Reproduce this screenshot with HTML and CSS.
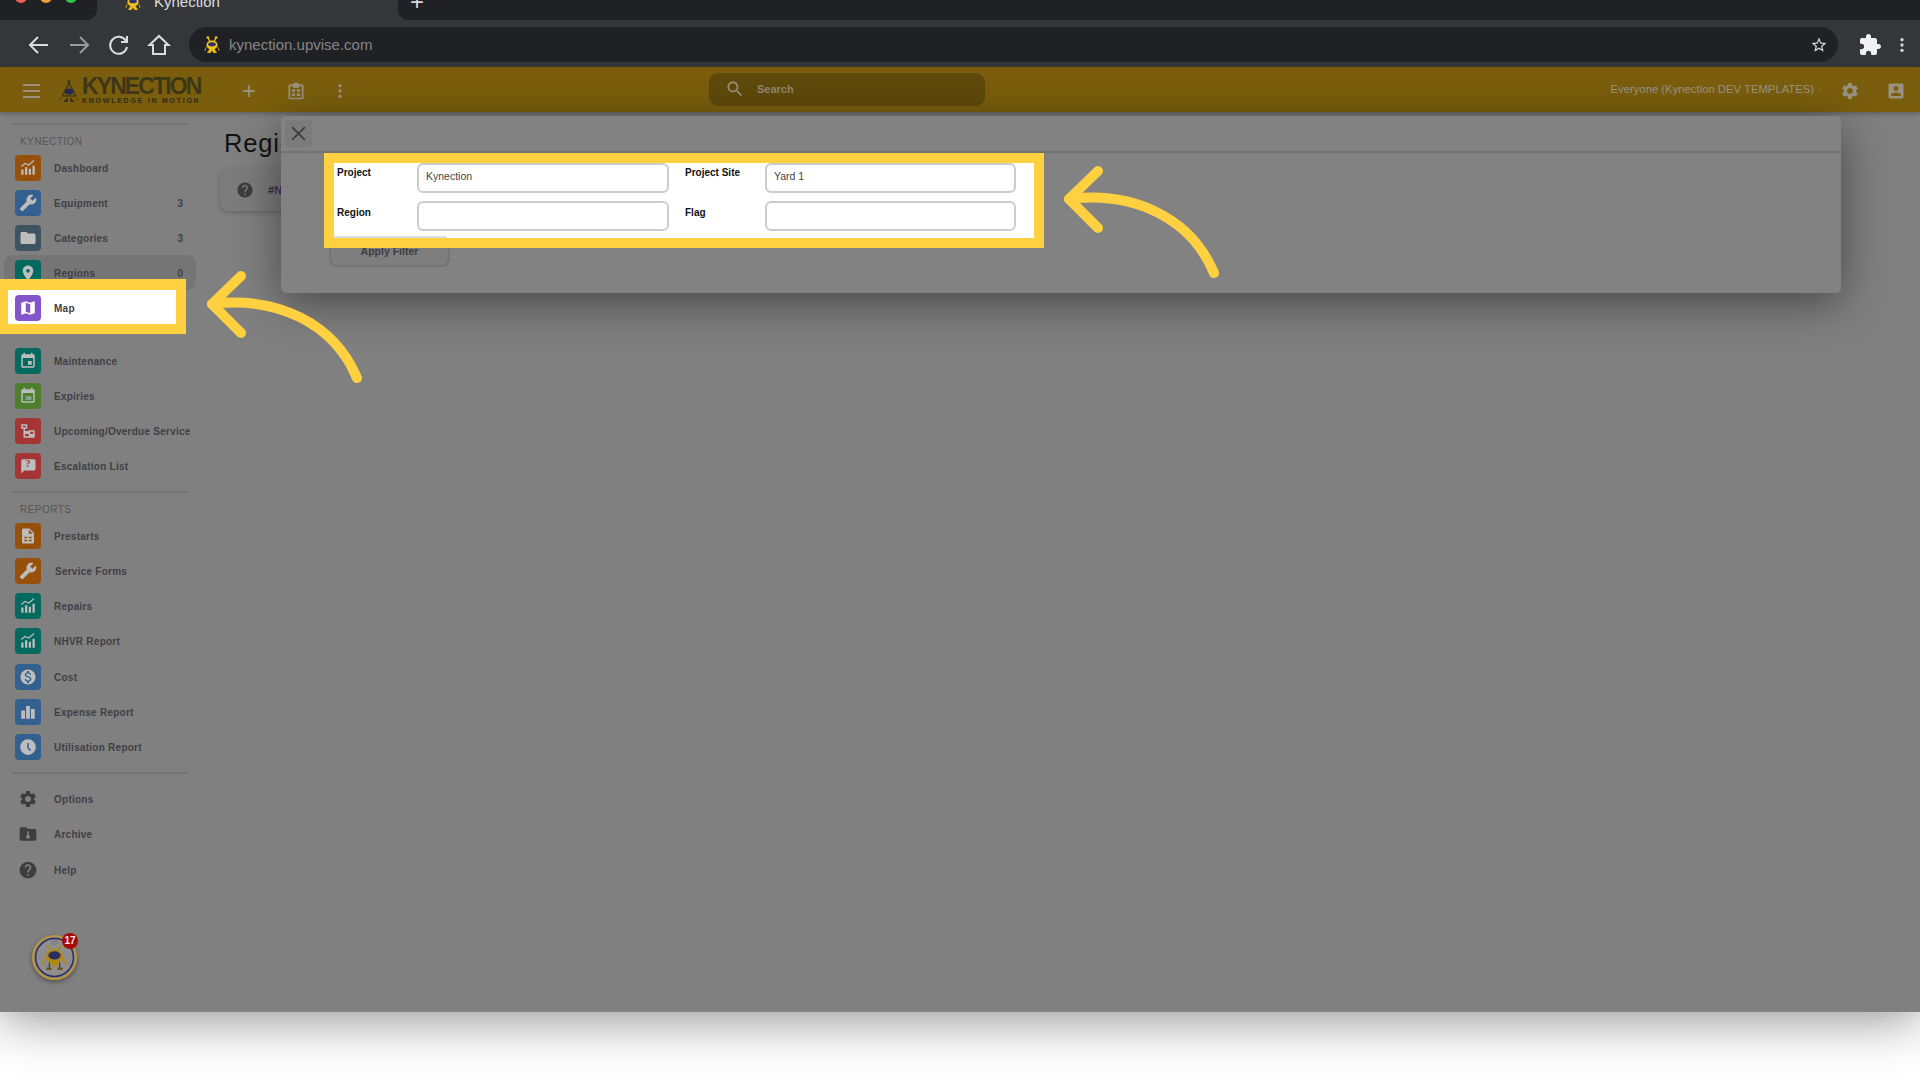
FILE: index.html
```html
<!DOCTYPE html>
<html lang="en">
<head>
  <meta charset="UTF-8" />
  <title>Kynection</title>
  <link rel="stylesheet" href="styles.css">
</head>
<body>

<!-- icon sheet -->
<svg class="sprites" width="0" height="0">
  <defs>
    <symbol id="i-chart" viewBox="0 0 24 24"><path d="M3 14h3v7H3zM8 11h3v10H8zM13 13h3v8h-3zM18 9h3v12h-3z"/><path d="M3 10l5-4 5 2 7-6" fill="none" stroke="currentColor" stroke-width="1.6"/></symbol>
    <symbol id="i-wrench" viewBox="0 0 24 24"><path transform="matrix(-1 0 0 1 24 0)" d="M22.7 19l-9.1-9.1c.9-2.3.4-5-1.5-6.9-2-2-5-2.4-7.4-1.3L9 6 6 9 1.6 4.7C.4 7.1.9 10.1 2.9 12.1c1.9 1.9 4.6 2.4 6.9 1.5l9.1 9.1c.4.4 1 .4 1.4 0l2.3-2.3c.5-.4.5-1.1.1-1.4z"/></symbol>
    <symbol id="i-folder" viewBox="0 0 24 24"><path d="M10 4H4c-1.1 0-1.99.9-1.99 2L2 18c0 1.1.9 2 2 2h16c1.1 0 2-.9 2-2V8c0-1.1-.9-2-2-2h-8l-2-2z"/></symbol>
    <symbol id="i-place" viewBox="0 0 24 24"><path d="M12 2C8.13 2 5 5.13 5 9c0 5.25 7 13 7 13s7-7.75 7-13c0-3.87-3.13-7-7-7zm0 9.5c-1.38 0-2.5-1.12-2.5-2.5s1.12-2.5 2.5-2.5 2.5 1.12 2.5 2.5-1.12 2.5-2.5 2.5z"/></symbol>
    <symbol id="i-map" viewBox="0 0 24 24"><path d="M20.5 3l-.16.03L15 5.1 9 3 3.36 4.9c-.21.07-.36.25-.36.48V20.5c0 .28.22.5.5.5l.16-.03L9 18.9l6 2.1 5.64-1.9c.21-.07.36-.25.36-.48V3.5c0-.28-.22-.5-.5-.5zM15 19l-6-2.11V5l6 2.11V19z"/></symbol>
    <symbol id="i-event" viewBox="0 0 24 24"><path d="M17 12h-5v5h5v-5zM16 1v2H8V1H6v2H5c-1.11 0-1.99.9-1.99 2L3 19c0 1.1.89 2 2 2h14c1.1 0 2-.9 2-2V5c0-1.1-.9-2-2-2h-1V1h-2zm3 18H5V8h14v11z"/></symbol>
    <symbol id="i-cal30" viewBox="0 0 24 24"><path d="M16 1v2H8V1H6v2H5c-1.11 0-1.99.9-1.99 2L3 19c0 1.1.89 2 2 2h14c1.1 0 2-.9 2-2V5c0-1.1-.9-2-2-2h-1V1h-2zm3 18H5V8h14v11z"/><text x="12" y="17.5" text-anchor="middle" font-family="Liberation Serif, serif" font-size="9" font-weight="700">30</text></symbol>
    <symbol id="i-gantt" viewBox="0 0 24 24"><path d="M3 3h8v6H8v3h5v-1h8v7h-8v-2H8v3h5v-1h8v3H6V9H3zM5 5v2h4V5zM15 13v3h4v-3z"/></symbol>
    <symbol id="i-bubble" viewBox="0 0 24 24"><path d="M3 5c0-1 .9-2 2-2h15c1.1 0 2 1 2 2v11c0 1.1-.9 2-2 2H7l-4 4z"/></symbol>
    <symbol id="i-doc" viewBox="0 0 24 24"><path d="M6 2h8l6 6v12c0 1.1-.9 2-2 2H6c-1.1 0-2-.9-2-2V4c0-1.1.9-2 2-2zm1 11v2h4v-2zm6 0v2h4v-2zm-6 4v2h4v-2zm6 0v2h4v-2zM13 3.5V9h5.5z"/></symbol>
    <symbol id="i-dollar" viewBox="0 0 24 24"><path d="M12 2C6.48 2 2 6.48 2 12s4.48 10 10 10 10-4.48 10-10S17.52 2 12 2zm1.41 16.09V20h-2.67v-1.93c-1.71-.36-3.16-1.46-3.27-3.4h1.96c.1 1.05.82 1.87 2.65 1.87 1.96 0 2.4-.98 2.4-1.59 0-.83-.44-1.61-2.67-2.14-2.48-.6-4.18-1.62-4.18-3.67 0-1.72 1.39-2.84 3.11-3.21V4h2.67v1.95c1.86.45 2.79 1.86 2.85 3.39H14.3c-.05-1.11-.64-1.87-2.22-1.87-1.5 0-2.4.68-2.4 1.64 0 .84.65 1.39 2.67 1.91s4.18 1.39 4.18 3.91c-.01 1.83-1.38 2.83-3.12 3.16z"/></symbol>
    <symbol id="i-bars" viewBox="0 0 24 24"><path d="M3 10h5v11H3zM9.500 4h5v17h-5zM16 8h5v13h-5z"/></symbol>
    <symbol id="i-clock" viewBox="0 0 24 24"><path d="M12 1.5a10.5 10.5 0 1 0 0 21 10.5 10.5 0 0 0 0-21zm-1 5h2v6.2l3.2 3.2-1.4 1.4-3.8-3.8z"/></symbol>
    <symbol id="i-gear" viewBox="0 0 24 24"><path d="M19.14 12.94c.04-.3.06-.61.06-.94 0-.32-.02-.64-.07-.94l2.03-1.58c.18-.14.23-.41.12-.61l-1.92-3.32c-.12-.22-.37-.29-.59-.22l-2.39.96c-.5-.38-1.03-.7-1.62-.94l-.36-2.54c-.04-.24-.24-.41-.48-.41h-3.84c-.24 0-.43.17-.47.41l-.36 2.54c-.59.24-1.13.57-1.62.94l-2.39-.96c-.22-.08-.47 0-.59.22L2.74 8.87c-.12.21-.08.47.12.61l2.03 1.58c-.05.3-.09.63-.09.94s.02.64.07.94l-2.03 1.58c-.18.14-.23.41-.12.61l1.92 3.32c.12.22.37.29.59.22l2.39-.96c.5.38 1.03.7 1.62.94l.36 2.54c.05.24.24.41.48.41h3.84c.24 0 .44-.17.47-.41l.36-2.54c.59-.24 1.13-.56 1.62-.94l2.39.96c.22.08.47 0 .59-.22l1.92-3.32c.12-.22.07-.47-.12-.61l-2.01-1.58zM12 15.6c-1.98 0-3.6-1.62-3.6-3.6s1.62-3.6 3.6-3.6 3.6 1.62 3.6 3.6-1.62 3.6-3.6 3.6z"/></symbol>
    <symbol id="i-archive" viewBox="0 0 24 24"><path d="M10 4H4c-1.1 0-2 .9-2 2v12c0 1.1.9 2 2 2h16c1.1 0 2-.9 2-2V8c0-1.1-.9-2-2-2h-8zm1 5h2v4.1a2.5 2.5 0 1 1-2 0z"/></symbol>
    <symbol id="i-help" viewBox="0 0 24 24"><path d="M12 2C6.48 2 2 6.48 2 12s4.48 10 10 10 10-4.48 10-10S17.52 2 12 2zm1 17h-2v-2h2v2zm2.07-7.75l-.9.92C13.45 12.9 13 13.5 13 15h-2v-.5c0-1.1.45-2.1 1.17-2.83l1.24-1.26c.37-.36.59-.86.59-1.41 0-1.1-.9-2-2-2s-2 .9-2 2H8c0-2.21 1.79-4 4-4s4 1.79 4 4c0 .88-.36 1.68-.93 2.25z"/></symbol>
    <symbol id="i-search" viewBox="0 0 24 24"><path d="M15.5 14h-.79l-.28-.27C15.41 12.59 16 11.11 16 9.5 16 5.91 13.09 3 9.5 3S3 5.91 3 9.5 5.91 16 9.5 16c1.61 0 3.09-.59 4.23-1.57l.27.28v.79l5 4.99L20.49 19l-4.99-5zm-6 0C7.01 14 5 11.99 5 9.5S7.01 5 9.5 5 14 7.01 14 9.5 11.99 14 9.5 14z"/></symbol>
    <symbol id="i-person" viewBox="0 0 24 24"><path d="M3 5v14c0 1.1.89 2 2 2h14c1.1 0 2-.9 2-2V5c0-1.1-.9-2-2-2H5c-1.11 0-2 .9-2 2zm12 4c0 1.66-1.34 3-3 3s-3-1.34-3-3 1.34-3 3-3 3 1.34 3 3zm-9 8c0-2 4-3.1 6-3.1s6 1.1 6 3.1v1H6v-1z"/></symbol>
    <symbol id="i-puzzle" viewBox="0 0 24 24"><path d="M20.5 11H19V7c0-1.1-.9-2-2-2h-4V3.5C13 2.12 11.88 1 10.5 1S8 2.12 8 3.5V5H4c-1.1 0-1.99.9-1.99 2v3.8H3.5c1.49 0 2.7 1.21 2.7 2.7s-1.21 2.7-2.7 2.7H2V20c0 1.1.9 2 2 2h3.8v-1.5c0-1.49 1.21-2.7 2.7-2.7 1.49 0 2.7 1.21 2.7 2.7V22H17c1.1 0 2-.9 2-2v-4h1.5c1.38 0 2.5-1.12 2.5-2.5S21.88 11 20.5 11z"/></symbol>
    <symbol id="i-star" viewBox="0 0 24 24"><path d="M22 9.24l-7.19-.62L12 2 9.19 8.63 2 9.24l5.46 4.73L5.82 21 12 17.27 18.18 21l-1.63-7.03L22 9.24zM12 15.4l-3.76 2.27 1-4.28-3.32-2.88 4.38-.38L12 6.1l1.71 4.04 4.38.38-3.32 2.88 1 4.28L12 15.4z"/></symbol>
    <symbol id="i-dots" viewBox="0 0 24 24"><circle cx="12" cy="4" r="2.5"/><circle cx="12" cy="12" r="2.5"/><circle cx="12" cy="20" r="2.5"/></symbol>
    <symbol id="i-clip" viewBox="0 0 24 24"><path d="M9 2h6v2h4c1.1 0 2 .9 2 2v14c0 1.1-.9 2-2 2H5c-1.1 0-2-.9-2-2V6c0-1.1.9-2 2-2h4zM5 6v14h14V6h-3v2H8V6zm2 4h4v3H7zm6 0h4v3h-4zm-6 5h4v3H7zm6 0h4v3h-4z"/></symbol>
    <symbol id="i-bot" viewBox="0 0 24 24">
      <path d="M9 7L6.5 2M15 7l2.5-5" fill="none" stroke="#f2c21a" stroke-width="1.8"/>
      <circle cx="6.5" cy="2" r="1.8" fill="#f2c21a"/><circle cx="17.5" cy="2" r="1.8" fill="#f2c21a"/>
      <ellipse cx="12" cy="12" rx="7.5" ry="6" fill="#f2c21a"/>
      <path d="M4 15l-1.5 5M20 15l1.5 5M6 22h4l2-4 2 4h4l-6-8z" fill="#f2c21a" stroke="#f2c21a"/>
      <ellipse cx="12" cy="11" rx="5" ry="2.8" fill="#2b2f73"/>
    </symbol>
    <symbol id="i-arrow" viewBox="0 0 170 120">
      <path d="M39 11L10 39l29 29" fill="none" stroke="#ffd040" stroke-width="10" stroke-linecap="round" stroke-linejoin="round"/>
      <path d="M10 39C75 31 132 58 155 113" fill="none" stroke="#ffd040" stroke-width="10" stroke-linecap="round"/>
    </symbol>
  </defs>
</svg>

<div class="stage">
  <!-- browser chrome -->
  <div class="tabstrip">
    <div class="tab-dark tab-dark-left">
      <span class="light light-red"></span>
      <span class="light light-amber"></span>
      <span class="light light-green"></span>
    </div>
    <div class="tab-active">
      <svg class="tab-favicon"><use href="#i-bot"/></svg>
      <span class="tab-title">Kynection</span>
    </div>
    <div class="tab-dark tab-dark-right"><span class="tab-plus">+</span></div>
  </div>

  <div class="toolbar">
    <svg class="nav-icon" viewBox="0 0 24 24"><path d="M21 12H4M11 4l-8 8 8 8"/></svg>
    <svg class="nav-icon nav-off" viewBox="0 0 24 24"><path d="M3 12h17M13 4l8 8-8 8"/></svg>
    <svg class="nav-icon" viewBox="0 0 24 24"><path d="M19 8a8.5 8.5 0 1 0 1 6M20 3v6h-6"/></svg>
    <svg class="nav-icon" viewBox="0 0 24 24"><path d="M2.5 12L12 3l9.5 9H18v9H6v-9z"/></svg>
    <div class="omnibox">
      <svg class="omni-favicon"><use href="#i-bot"/></svg>
      <span class="omni-url">kynection.upvise.com</span>
      <svg class="omni-star"><use href="#i-star"/></svg>
    </div>
    <svg class="puzzle"><use href="#i-puzzle"/></svg>
    <svg class="chrome-dots"><use href="#i-dots"/></svg>
  </div>

  <!-- app bar -->
  <header class="appbar">
    <div class="appbar-left">
      <div class="burger"><span></span><span></span><span></span></div>
      <div class="logo">
        <svg class="logo-bot" viewBox="0 0 24 24">
          <circle cx="12" cy="2.5" r="1.5" fill="#3a3517"/>
          <path d="M12 4L5 17h14z" fill="#6d5a10" stroke="#2f2c18" stroke-width="1"/>
          <ellipse cx="12" cy="12.5" rx="4.5" ry="3" fill="#26284d"/>
          <path d="M3 20h1M20 20h1M7 22h3v-3M14 19v3h3" fill="none" stroke="#2b2b20" stroke-width="1.6"/>
        </svg>
        <div class="logo-words">
          <div class="logo-name">KYNECTION</div>
          <div class="logo-tag">KNOWLEDGE IN MOTION</div>
        </div>
      </div>
      <span class="bar-plus">+</span>
      <svg class="bar-icon bar-clip"><use href="#i-clip"/></svg>
      <svg class="bar-icon bar-dots"><use href="#i-dots"/></svg>
    </div>
    <div class="searchbox">
      <svg class="search-icon"><use href="#i-search"/></svg>
      <span>Search</span>
    </div>
    <div class="user-name">Everyone (Kynection DEV TEMPLATES) ·</div>
    <svg class="bar-icon bar-gear"><use href="#i-gear"/></svg>
    <svg class="bar-icon bar-person"><use href="#i-person"/></svg>
  </header>

  <div class="shell">
    <aside class="sidebar">
      <div class="divider"></div>
      <div class="section">KYNECTION</div>
      <div class="row"><span class="tile orange"><svg><use href="#i-chart"/></svg></span><span class="row-name">Dashboard</span></div>
      <div class="row"><span class="tile blue"><svg><use href="#i-wrench"/></svg></span><span class="row-name">Equipment</span><span class="count">3</span></div>
      <div class="row"><span class="tile slate"><svg><use href="#i-folder"/></svg></span><span class="row-name">Categories</span><span class="count">3</span></div>
      <div class="row row-on"><span class="tile teal"><svg><use href="#i-place"/></svg></span><span class="row-name">Regions</span><span class="count">0</span></div>
      <div class="row"><span class="tile"></span><span class="row-name">Map</span></div>
      <div class="row row-gap"><span class="tile teal"><svg><use href="#i-event"/></svg></span><span class="row-name">Maintenance</span></div>
      <div class="row"><span class="tile green"><svg><use href="#i-cal30"/></svg></span><span class="row-name">Expiries</span></div>
      <div class="row"><span class="tile red"><svg><use href="#i-gantt"/></svg></span><span class="row-name">Upcoming/Overdue Service</span></div>
      <div class="row"><span class="tile red"><svg><use href="#i-bubble"/></svg><b class="tile-q">?</b></span><span class="row-name">Escalation List</span></div>
      <div class="divider divider-mid"></div>
      <div class="section">REPORTS</div>
      <div class="row"><span class="tile orange"><svg><use href="#i-doc"/></svg></span><span class="row-name">Prestarts</span></div>
      <div class="row"><span class="tile orange"><svg><use href="#i-wrench"/></svg></span><span class="row-name row-name-nudge">Service Forms</span></div>
      <div class="row"><span class="tile teal"><svg><use href="#i-chart"/></svg></span><span class="row-name">Repairs</span></div>
      <div class="row"><span class="tile teal"><svg><use href="#i-chart"/></svg></span><span class="row-name">NHVR Report</span></div>
      <div class="row row-step"><span class="tile blue"><svg><use href="#i-dollar"/></svg></span><span class="row-name">Cost</span></div>
      <div class="row"><span class="tile blue"><svg><use href="#i-bars"/></svg></span><span class="row-name">Expense Report</span></div>
      <div class="row"><span class="tile blue"><svg><use href="#i-clock"/></svg></span><span class="row-name">Utilisation Report</span></div>
      <div class="divider divider-low"></div>
      <div class="row"><span class="tile plain"><svg><use href="#i-gear"/></svg></span><span class="row-name">Options</span></div>
      <div class="row"><span class="tile plain"><svg><use href="#i-archive"/></svg></span><span class="row-name">Archive</span></div>
      <div class="row row-step"><span class="tile plain"><svg><use href="#i-help"/></svg></span><span class="row-name">Help</span></div>

      <div class="avatar">
        <svg viewBox="0 0 44 44">
          <circle cx="22" cy="22" r="21" fill="#8a8a8a" stroke="#b8953a" stroke-width="2"/>
          <circle cx="22" cy="22" r="18.5" fill="#8e8e8e" stroke="#2c2c66" stroke-width="1.5"/>
          <ellipse cx="22" cy="7.5" rx="3" ry="1.5" fill="none" stroke="#6a6a78" stroke-width=".8"/>
          <path d="M19 15l-4-5M25 15l4-5" stroke="#b08a14" stroke-width="1.5"/>
          <path d="M22 32l-8-8c-2-6 3-10 8-10s10 4 8 10z" fill="#b08a14"/>
          <ellipse cx="22" cy="20" rx="6" ry="4" fill="#2a2c62"/>
          <path d="M14 22l-4 7M30 22l4 7" fill="none" stroke="#b08a14" stroke-width="1.5"/>
          <path d="M17 27v5M27 27v5" stroke="#3d3d3d" stroke-width="1.2"/>
          <path d="M14 33h5M25 33h5" stroke="#6a5518" stroke-width="2.5"/>
        </svg>
        <span class="avatar-badge">17</span>
      </div>
    </aside>

    <main class="content">
      <h1 class="page-title">Regions</h1>
      <div class="hint-card">
        <svg class="hint-icon"><use href="#i-help"/></svg>
        <span class="hint-text">#<i>No Filter</i></span>
      </div>
    </main>
  </div>

  <!-- filter dialog -->
  <section class="modal">
    <div class="modal-head">
      <button class="modal-close" type="button">
        <svg viewBox="0 0 24 24"><path d="M4 4l16 16M20 4L4 20"/></svg>
      </button>
    </div>
    <div class="modal-body">
      <div class="focus-form">
        <label class="field-label">Project</label>
        <input class="field-input" type="text" value="Kynection" />
        <label class="field-label field-label-2">Project Site</label>
        <input class="field-input" type="text" value="Yard 1" />
        <label class="field-label field-label-low">Region</label>
        <input class="field-input" type="text" />
        <label class="field-label field-label-2 field-label-low">Flag</label>
        <input class="field-input" type="text" />
        <span class="button-peek"></span>
      </div>
      <button class="apply-btn" type="button">Apply Filter</button>
    </div>
  </section>

  <!-- tutorial highlights -->
  <div class="focus-map">
    <span class="tile purple"><svg><use href="#i-map"/></svg></span>
    <span class="row-name">Map</span>
  </div>
  <svg class="arrow arrow-form"><use href="#i-arrow"/></svg>
  <svg class="arrow arrow-map"><use href="#i-arrow"/></svg>
</div>

</body>
</html>
```

FILE: styles.css
```css
* { margin: 0; padding: 0; box-sizing: border-box; }
html, body { height: 100%; }
body {
  background: #fff;
  overflow: hidden;
  font-family: "Liberation Sans", Arial, sans-serif;
}
.sprites { position: absolute; }
svg { display: block; fill: currentColor; }

.stage {
  position: relative;
  height: 1012px;
  background: #808080;
  box-shadow: 0 6px 50px rgba(0,0,0,0.45);
  overflow: hidden;
}

/* browser tabs */
.tabstrip {
  display: flex;
  height: 20px;
  background: #35363a;
  overflow: hidden;
}
.tab-dark { height: 20px; background: #202124; display: flex; }
.tab-dark-left {
  width: 97px;
  border-bottom-right-radius: 10px;
  padding-left: 15px;
  gap: 13px;
}
.tab-dark-right {
  flex: 1;
  border-bottom-left-radius: 10px;
  padding-left: 12px;
}
.light { width: 12px; height: 12px; border-radius: 50%; margin-top: -9px; }
.light-red { background: #ed5f57; }
.light-amber { background: #e8a33a; }
.light-green { background: #33c24a; }
.tab-plus { color: #d8d8d8; font-size: 24px; line-height: 20px; margin-top: -8px; }
.tab-active { width: 301px; display: flex; padding-left: 27px; gap: 12px; }
.tab-favicon { width: 18px; height: 18px; margin-top: -7px; }
.tab-title { color: #dcdcdc; font-size: 15px; line-height: 18px; margin-top: -7px; }

/* address bar */
.toolbar {
  display: flex;
  align-items: center;
  height: 47px;
  background: #35363a;
  padding: 2px 10px 0 27px;
}
.nav-icon {
  width: 24px;
  height: 24px;
  margin-right: 16px;
  fill: none;
  stroke: #dadce0;
  stroke-width: 2;
}
.nav-off { stroke: #9a9b9f; }
.omnibox {
  display: flex;
  align-items: center;
  flex: 1;
  height: 35px;
  margin-left: 2px;
  padding: 0 10px 0 14px;
  background: #202124;
  border-radius: 18px;
}
.omni-favicon { width: 18px; height: 18px; }
.omni-url { margin-left: 8px; flex: 1; color: #85868a; font-size: 15px; }
.omni-star { width: 18px; height: 18px; color: #dadce0; }
.puzzle { width: 24px; height: 24px; margin-left: 20px; color: #f1f1f1; }
.chrome-dots { width: 16px; height: 18px; margin-left: 12px; color: #d8d8d8; }

/* app bar */
.appbar {
  position: relative;
  z-index: 2;
  display: flex;
  align-items: center;
  height: 45px;
  background: #7a5e0d;
  box-shadow: 0 2px 4px rgba(0,0,0,0.25);
}
.appbar-left { display: flex; align-items: center; width: 709px; padding-left: 23px; padding-top: 2px; }
.burger { width: 17px; display: flex; flex-direction: column; gap: 4px; }
.burger span { height: 2px; background: #9a9280; }
.logo { display: flex; align-items: center; margin-left: 17px; width: 145px; }
.logo-bot { width: 24px; height: 26px; flex: none; }
.logo-words { margin-left: 1px; }
.logo-name {
  color: #3d3718;
  font-size: 23px;
  font-weight: 700;
  line-height: 20px;
  letter-spacing: -1.9px;
}
.logo-tag {
  color: #2f2b18;
  font-size: 7px;
  font-weight: 700;
  line-height: 9px;
  letter-spacing: 1.75px;
  white-space: nowrap;
}
.bar-plus {
  margin-left: 39px;
  width: 16px;
  color: #9a9280;
  font-size: 24px;
  line-height: 24px;
  text-align: center;
}
.bar-icon { width: 20px; height: 20px; color: #9a9280; }
.bar-clip { margin-left: 29px; }
.bar-dots { margin-left: 26px; width: 16px; height: 18px; }
.searchbox {
  display: flex;
  align-items: center;
  width: 276px;
  height: 33px;
  margin-bottom: 1px;
  padding-left: 16px;
  gap: 12px;
  background: #5f4a0b;
  border-radius: 9px;
  color: #8e8873;
  font-size: 11px;
  font-weight: 700;
}
.search-icon { width: 20px; height: 20px; color: #9a9280; }
.user-name {
  margin-left: auto;
  margin-bottom: 1px;
  color: #9a9484;
  font-size: 11.3px;
  white-space: nowrap;
}
.bar-gear { margin-left: 19px; width: 20px; margin-top: 2px; }
.bar-person { margin-left: 26px; margin-right: 14px; margin-top: 2px; }

/* sidebar */
.shell { display: flex; height: 900px; }
.sidebar { width: 200px; flex: none; padding-top: 11px; }
.divider { height: 2px; margin: 0 12px; background: #757575; width: 176px; }
.divider-mid { margin-top: 8px; }
.divider-low { margin-top: 8px; margin-bottom: 7px; }
.section {
  margin: 9px 0 0 20px;
  color: #555;
  font-size: 10px;
  line-height: 16px;
  letter-spacing: 0.45px;
}
.row {
  display: flex;
  align-items: center;
  height: 35px;
  width: 192px;
  margin-left: 4px;
  padding: 0 13px 0 11px;
  border-radius: 8px;
}
.row-on { background: #757575; }
.row-gap { margin-top: 18px; }
.row-step { margin-top: 1px; }
.tile {
  position: relative;
  display: flex;
  align-items: center;
  justify-content: center;
  width: 26px;
  height: 26px;
  flex: none;
  border-radius: 4px;
  color: #bdbdbd;
}
.tile svg { width: 18px; height: 18px; }
.tile-q { position: absolute; top: 5px; left: 0; width: 26px; text-align: center; font: 700 10px "Liberation Serif", serif; color: #a53434; }
.orange { background: #96500a; }
.blue { background: #33608f; }
.slate { background: #3d5460; }
.teal { background: #04695e; }
.green { background: #4d7f2d; }
.red { background: #a53434; }
.purple { background: #8355cb; color: #fff; }
.plain { color: #3d3d3d; }
.plain svg { width: 20px; height: 20px; }
.row-name {
  margin: 1px 0 0 13px;
  color: #3f3f45;
  font-size: 10px;
  font-weight: 700;
  letter-spacing: 0.25px;
  white-space: nowrap;
}
.row-name-nudge { margin-left: 14px; }
.count { margin: 1px 0 0 auto; color: #3f3f45; font-size: 10px; font-weight: 700; }

.avatar { position: relative; width: 45px; height: 45px; margin: 48px 0 0 32px; border-radius: 50%; box-shadow: 0 2px 5px rgba(0,0,0,0.4); }
.avatar-badge {
  position: absolute;
  top: -2px;
  left: 30px;
  width: 16px;
  height: 16px;
  border-radius: 50%;
  background: #a80808;
  color: #e8e8e8;
  font-size: 10px;
  font-weight: 700;
  line-height: 16px;
  text-align: center;
}

/* page content, mostly under the dialog */
.content { flex: 1; padding: 16px 0 0 24px; }
.page-title {
  color: #121212;
  font-size: 25.5px;
  font-weight: 400;
  line-height: 30px;
  letter-spacing: 0.8px;
}
.hint-card {
  display: flex;
  align-items: center;
  height: 43px;
  width: 1000px;
  margin: 10px 0 0 -4px;
  padding-left: 16px;
  gap: 14px;
  background: #7c7c7c;
  border-radius: 8px;
  box-shadow: 0 2px 5px rgba(0,0,0,0.2);
}
.hint-icon { width: 18px; height: 18px; color: #3d3d3d; }
.hint-text { color: #333; font-size: 11px; font-weight: 700; }
.hint-text i { color: #4a2a6a; font-style: normal; }

/* dialog */
.modal {
  position: absolute;
  z-index: 3;
  left: 281px;
  top: 116px;
  width: 1560px;
  height: 177px;
  background: #828282;
  border-radius: 5px;
  box-shadow: 0 10px 45px rgba(0,0,0,0.45);
}
.modal-head {
  height: 37px;
  padding: 4px;
  border-bottom: 2px solid #727272;
}
.modal-close {
  display: block;
  width: 27px;
  height: 27px;
  padding: 4px;
  border: none;
  border-radius: 3px;
  background: #7b7b7b;
}
.modal-close svg { fill: none; stroke: #3a3a3a; stroke-width: 2; }
.modal-body { padding-left: 43px; }
.focus-form {
  position: relative;
  z-index: 1;
  display: grid;
  grid-template-columns: 80px 252px 96px 251px;
  grid-auto-rows: 30px;
  row-gap: 8px;
  width: 720px;
  height: 95px;
  padding-left: 3px;
  background: #fff;
  border: 10px solid #ffd040;
}
.field-label {
  padding-top: 4px;
  color: #111;
  font-size: 10px;
  font-weight: 700;
}
.field-label-2 { padding-left: 16px; }
.field-label-low { padding-top: 6px; }
.field-input {
  width: 100%;
  height: 30px;
  padding: 0 7px 5px;
  border: 2px solid #ccc;
  border-radius: 6px;
  color: #444;
  font-family: "Liberation Sans", Arial, sans-serif;
  font-size: 10.5px;
}
.button-peek {
  position: absolute;
  left: 0;
  bottom: 0;
  width: 113px;
  height: 2px;
  background: #dedede;
}
.apply-btn {
  display: block;
  width: 121px;
  height: 31px;
  margin: -12px 0 0 5px;
  padding-bottom: 2px;
  border: 2px solid #747474;
  border-radius: 8px;
  background: #7e7e7e;
  color: #3d3d3d;
  font-family: "Liberation Sans", Arial, sans-serif;
  font-size: 10.5px;
  font-weight: 700;
}

/* highlight over the Map row */
.focus-map {
  position: absolute;
  z-index: 4;
  left: 0;
  top: 279px;
  display: flex;
  align-items: center;
  width: 186px;
  height: 55px;
  padding: 1px 0 0 7px;
  background: #fff;
  border: solid #ffd040;
  border-width: 11px 10px 10px 8px;
}

.arrow { position: absolute; z-index: 5; width: 170px; height: 120px; color: #ffd040; }
.arrow-form { left: 1059px; top: 160px; }
.arrow-map { left: 202px; top: 265px; }
```
